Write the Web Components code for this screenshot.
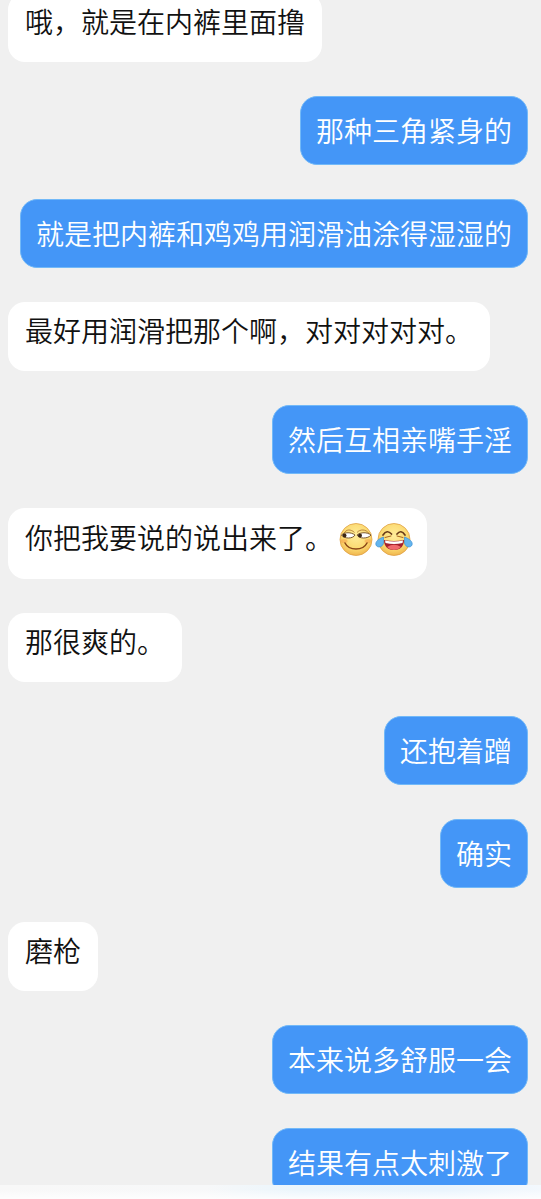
<!DOCTYPE html>
<html lang="zh-CN">
<head>
<meta charset="utf-8">
<meta name="viewport" content="width=device-width, initial-scale=1">
<title>聊天</title>
<style>
body { margin: 0; background: #f0f0f0; font-family: "Noto Sans CJK SC", sans-serif; }
</style>
</head>
<body>
<chat-screen>
  <chat-message from="peer">哦，就是在内裤里面撸</chat-message>
  <chat-message from="me">那种三角紧身的</chat-message>
  <chat-message from="me">就是把内裤和鸡鸡用润滑油涂得湿湿的</chat-message>
  <chat-message from="peer">最好用润滑把那个啊，对对对对对。</chat-message>
  <chat-message from="me">然后互相亲嘴手淫</chat-message>
  <chat-message from="peer" class="with-emoji">你把我要说的说出来了。<chat-emoji name="smirk"></chat-emoji><chat-emoji name="joy"></chat-emoji></chat-message>
  <chat-message from="peer">那很爽的。</chat-message>
  <chat-message from="me">还抱着蹭</chat-message>
  <chat-message from="me">确实</chat-message>
  <chat-message from="peer">磨枪</chat-message>
  <chat-message from="me">本来说多舒服一会</chat-message>
  <chat-message from="me">结果有点太刺激了</chat-message>
</chat-screen>

<script>
class ChatScreen extends HTMLElement {
  constructor() {
    super();
    this.attachShadow({ mode: "open" }).innerHTML = `
      <style>
        :host { display: flex; flex-direction: column; height: 100vh; overflow: hidden; }
        main { flex: 1; min-height: 0; overflow: hidden; }
        .log { display: flex; flex-direction: column; gap: 34px; margin-top: -7px; padding: 0 13px 0 8px; }
        footer { flex: none; height: 14px; background: linear-gradient(90deg, #f8f8f8 0%, #f7f8f9 38%, #eaf5fc 55%, #e9f4fd 82%, #f3f8fd 100%); }
        footer::after { content: ""; display: block; height: 14px; background: linear-gradient(#ffffff00 30%, #ffffffd0); }
      </style>
      <main><div class="log" role="log"><slot></slot></div></main>
      <footer></footer>`;
  }
}

class ChatMessage extends HTMLElement {
  constructor() {
    super();
    this.attachShadow({ mode: "open" }).innerHTML = `
      <style>
        :host { display: block; box-sizing: border-box; max-width: 100%; font-size: 28px; font-weight: 350; line-height: 40px; border-radius: 17px; }
        :host([from="peer"]) { align-self: flex-start; padding: 8px 17px 21px; background: #fff; color: #111; }
        :host([from="me"]) { align-self: flex-end; padding: 13px 15px 14px; border: 1px solid #72b9f8; background: #4496f7; color: #fff; }
        :host(.with-emoji) { padding: 9px 14px 22px 17px; }
      </style>
      <slot></slot>`;
  }
}

const FACES = {
  smirk: `
    <path d="M7 12.500C9 8 14 8 17.500 11.500" fill="none" stroke="#a9702c" stroke-width=".8"/>
    <path d="M20 11.500C23 8 29 8 32 12.500" fill="none" stroke="#a9702c" stroke-width=".8"/>
    <path d="M4.500 14C8 11 14 11 18 14C16 18 7 18 4.500 14Z" fill="#fff" stroke="#6d4820" stroke-width=".9"/>
    <path d="M20 14C24 11 30 11 34 14C31 18 22 18 20 14Z" fill="#fff" stroke="#6d4820" stroke-width=".9"/>
    <circle cx="7.500" cy="14.500" r="2" fill="#3b2615"/>
    <circle cx="23" cy="14.500" r="2" fill="#3b2615"/>
    <ellipse cx="7" cy="20" rx="3.500" ry="2" fill="#f6a34a" opacity=".55"/>
    <ellipse cx="31" cy="20" rx="3.500" ry="2" fill="#f6a34a" opacity=".55"/>
    <path d="M8 22C12 30 26 30 30 22" fill="none" stroke="#8a4516" stroke-width="1.500" stroke-linecap="round"/>`,
  joy: `
    <path d="M8 14Q12 8 16.500 13M22 13Q26 8 30 14" fill="none" stroke="#693b1a" stroke-width="1.700" stroke-linecap="round"/>
    <path d="M10 16.500L16 15M22 15L28 16.500" stroke="#a9641f" stroke-width="1" stroke-linecap="round"/>
    <path d="M9 19Q19 21 29 19C29 26 24.500 29 19 29S9 26 9 19Z" fill="#a51f2b"/>
    <path d="M10 19.500Q19 21.500 28 19.500L27.500 22Q19 24 10.500 22Z" fill="#fff"/>
    <path d="M12 26Q19 21.500 26 26Q23 29 19 29T12 26Z" fill="#f0686c"/>
    <path d="M8.500 16C3 18 0 21 1 24C2.500 27.500 8 26 8.500 22Z" fill="#64b5ee" stroke="#3c91d6" stroke-width=".7"/>
    <path d="M29.500 16C35 18 38 21 37 24C35.500 27.500 30 26 29.500 22Z" fill="#64b5ee" stroke="#3c91d6" stroke-width=".7"/>`
};

class ChatEmoji extends HTMLElement {
  constructor() {
    super();
    this.attachShadow({ mode: "open" });
  }
  connectedCallback() {
    const name = this.getAttribute("name");
    this.shadowRoot.innerHTML = `
      <style>
        :host { display: inline-block; width: 38px; height: 40px; vertical-align: top; }
        :host([name="smirk"]) { margin-left: 4px; }
        svg { display: block; width: 38px; height: 38px; margin-top: 4px; }
      </style>
      <svg viewBox="0 0 38 38" aria-hidden="true">
        <defs><radialGradient id="skin" cx=".5" cy=".38" r=".65">
          <stop offset="0" stop-color="#ffed9b"/><stop offset=".65" stop-color="#fbd970"/><stop offset="1" stop-color="#eeb048"/>
        </radialGradient></defs>
        <circle cx="19" cy="18.500" r="16" fill="url(#skin)" stroke="#dfa144" stroke-width=".8"/>
        ${FACES[name]}
      </svg>`;
  }
}

customElements.define("chat-screen", ChatScreen);
customElements.define("chat-message", ChatMessage);
customElements.define("chat-emoji", ChatEmoji);
</script>
</body>
</html>
